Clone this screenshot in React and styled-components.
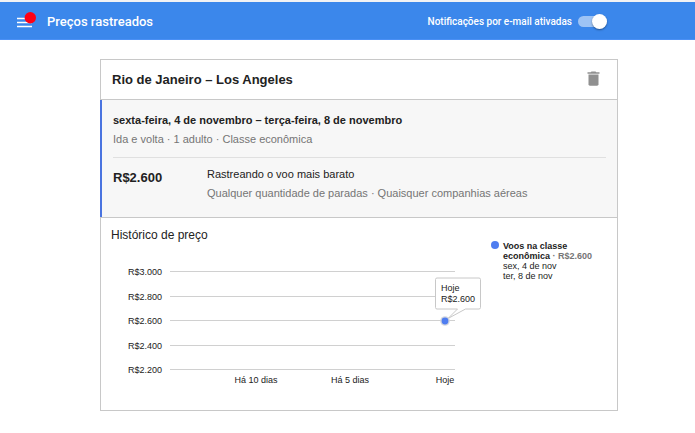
import React from "react";
import styled, { createGlobalStyle } from "styled-components";

const GlobalStyle = createGlobalStyle`
  *, *::before, *::after { box-sizing: border-box; }
  body {
    margin: 0;
    background: #fff;
    color: #222;
    font-family: "Liberation Sans", Arial, sans-serif;
  }
  h1, h2, h3, p { margin: 0; }
`;

const TopBar = styled.header`
  display: flex;
  align-items: center;
  height: 40px;
  padding: 2px 88px 0 16px;
  border-top: 2px solid #f1f2f4;
  border-bottom: 1px solid #4a90f5;
  background: #3b87eb;
  color: #fff;
  font-family: Roboto, sans-serif;
  font-weight: 500;
`;

const MenuButton = styled.button`
  display: flex;
  width: 24px;
  height: 24px;
  padding: 0;
  border: 0;
  background: none;
  color: inherit;
  cursor: pointer;
`;

const PageTitle = styled.h1`
  margin-left: 7px;
  font-size: 13px;
  line-height: 16px;
  font-weight: 500;
`;

const SwitchLabel = styled.label`
  display: flex;
  align-items: center;
  gap: 6px;
  margin-left: auto;
  font-size: 10px;
  line-height: 16px;
  cursor: pointer;
`;

const Switch = styled.input`
  appearance: none;
  display: flex;
  align-items: center;
  justify-content: flex-start;
  width: 29px;
  height: 11px;
  margin: 0;
  border-radius: 6px;
  background: rgba(255, 255, 255, 0.35);
  cursor: pointer;

  &:checked {
    justify-content: flex-end;
    background: rgba(255, 255, 255, 0.5);
  }

  &::before {
    content: "";
    width: 15px;
    height: 15px;
    border-radius: 50%;
    background: #fff;
    box-shadow: 0 1px 2px rgba(0, 0, 0, 0.4);
  }
`;

const Main = styled.main`
  padding: 19px 77px 22px 100px;
`;

const Card = styled.article`
  border: 1px solid #c8c8c8;
  background: #fff;
`;

const CardHeader = styled.header`
  display: flex;
  align-items: center;
  justify-content: space-between;
  height: 39px;
  padding: 0 14px 0 11px;
`;

const RouteTitle = styled.h2`
  font-size: 13px;
  line-height: 16px;
`;

const DeleteButton = styled.button`
  display: flex;
  align-items: center;
  justify-content: center;
  width: 20px;
  height: 20px;
  padding: 0;
  border: 0;
  background: none;
  color: #909090;
  cursor: pointer;
`;

const TripPanel = styled.section`
  margin-left: -1px;
  padding: 12px 11px 16px;
  border: solid #c8c8c8;
  border-width: 1px 0;
  box-shadow: inset 2px 0 #4a74e0;
  background: #f7f7f7;
  font-size: 11px;
  line-height: 16px;
`;

const Itinerary = styled.div`
  margin-left: 2px;
  padding-bottom: 10px;
  border-bottom: 1px solid #e0e0e0;
`;

const Line = styled.p`
  font-weight: ${({ $strong }) => ($strong ? 700 : 400)};
  color: ${({ $muted }) => ($muted ? "#757575" : "#222")};
`;

const Lines = styled.div`
  display: flex;
  flex-direction: column;
  gap: 3px;
`;

const Fare = styled.div`
  display: grid;
  grid-template-columns: 94px 1fr;
  margin-left: 2px;
  padding-top: 8px;
`;

const Price = styled.strong`
  padding-top: 4px;
  font-size: 13px;
  line-height: 16px;
`;

const History = styled.section`
  display: flex;
  align-items: flex-start;
  min-height: 192px;
  padding: 8px 20px 0 10px;
`;

const ChartColumn = styled.div`
  flex: none;
`;

const HistoryTitle = styled.h3`
  font-size: 12px;
  line-height: 18px;
  font-weight: 400;
`;

const Chart = styled.svg`
  display: block;
  font-size: 9px;
  fill: #222;
`;

const Legend = styled.div`
  display: flex;
  gap: 4px;
  margin: 15px 0 0 10px;
  font-size: 9px;
  line-height: 10px;
`;

const LegendDot = styled.span`
  flex: none;
  width: 8px;
  height: 8px;
  border-radius: 50%;
  background: #4f7df0;
`;

const LegendName = styled.p`
  font-weight: 700;
`;

const LegendPrice = styled.span`
  color: #757575;
`;

const priceTicks = [
  { label: "R$3.000", y: 28 },
  { label: "R$2.800", y: 53 },
  { label: "R$2.600", y: 77 },
  { label: "R$2.400", y: 102 },
  { label: "R$2.200", y: 126 },
];

const dayTicks = [
  { label: "Há 10 dias", x: 145 },
  { label: "Há 5 dias", x: 239 },
  { label: "Hoje", x: 334 },
];

function MenuIcon() {
  return (
    <svg width="24" height="24" viewBox="0 0 24 24" aria-hidden="true">
      <path d="M1 8.500h15M1 12.500h15M1 16.500h15" stroke="#fff" strokeWidth="1.4" fill="none" />
      <circle cx="14.300" cy="7.700" r="5.700" fill="#ff0015" />
    </svg>
  );
}

function TrashIcon() {
  return (
    <svg width="20" height="20" viewBox="0 0 20 20" fill="currentColor" aria-hidden="true">
      <path d="M4.500 2.200h3.200l.8-.8h4l.8.8h3.200v1.600h-12z" />
      <path d="M5.500 4.600h10v9.700a1.400 1.400 0 0 1-1.400 1.400H6.900a1.400 1.400 0 0 1-1.400-1.400z" />
    </svg>
  );
}

function PriceChart() {
  return (
    <Chart width="370" height="150" viewBox="0 0 370 150" role="img" aria-label="Histórico de preço">
      {priceTicks.map(({ label, y }) => (
        <g key={label}>
          <text x="51" y={y + 3} textAnchor="end">{label}</text>
          <path d={`M59 ${y - 0.5}H344`} stroke="#d0d0d0" />
        </g>
      ))}
      {dayTicks.map(({ label, x }) => (
        <text key={label} x={x} y="139" textAnchor="middle">{label}</text>
      ))}
      <path
        d="M326 34H368a1.500 1.500 0 0 1 1.500 1.500V63.500a1.500 1.500 0 0 1-1.500 1.500H354.500L337 74.500L346.500 65H326a1.500 1.500 0 0 1-1.500-1.500V35.500a1.500 1.500 0 0 1 1.500-1.500z"
        fill="#fff"
        stroke="#c8c8c8"
      />
      <text x="330" y="47">Hoje</text>
      <text x="330" y="58">R$2.600</text>
      <circle cx="334" cy="77" r="4.800" fill="#d4d7df" />
      <circle cx="334" cy="77" r="3.400" fill="#4f7df0" />
    </Chart>
  );
}

export default function App() {
  return (
    <>
      <GlobalStyle />
      <TopBar>
        <MenuButton type="button" aria-label="Menu">
          <MenuIcon />
        </MenuButton>
        <PageTitle>Preços rastreados</PageTitle>
        <SwitchLabel htmlFor="email-alerts">
          Notificações por e-mail ativadas
          <Switch id="email-alerts" type="checkbox" role="switch" defaultChecked />
        </SwitchLabel>
      </TopBar>
      <Main>
        <Card>
          <CardHeader>
            <RouteTitle>Rio de Janeiro – Los Angeles</RouteTitle>
            <DeleteButton type="button" aria-label="Excluir">
              <TrashIcon />
            </DeleteButton>
          </CardHeader>
          <TripPanel>
            <Itinerary>
              <Lines>
                <Line $strong>sexta-feira, 4 de novembro – terça-feira, 8 de novembro</Line>
                <Line $muted>Ida e volta · 1 adulto · Classe econômica</Line>
              </Lines>
            </Itinerary>
            <Fare>
              <Price>R$2.600</Price>
              <Lines>
                <Line>Rastreando o voo mais barato</Line>
                <Line $muted>Qualquer quantidade de paradas · Quaisquer companhias aéreas</Line>
              </Lines>
            </Fare>
          </TripPanel>
          <History>
            <ChartColumn>
              <HistoryTitle>Histórico de preço</HistoryTitle>
              <PriceChart />
            </ChartColumn>
            <Legend>
              <LegendDot />
              <div>
                <LegendName>
                  Voos na classe<br />
                  econômica <LegendPrice>· R$2.600</LegendPrice>
                </LegendName>
                <p>sex, 4 de nov</p>
                <p>ter, 8 de nov</p>
              </div>
            </Legend>
          </History>
        </Card>
      </Main>
    </>
  );
}
